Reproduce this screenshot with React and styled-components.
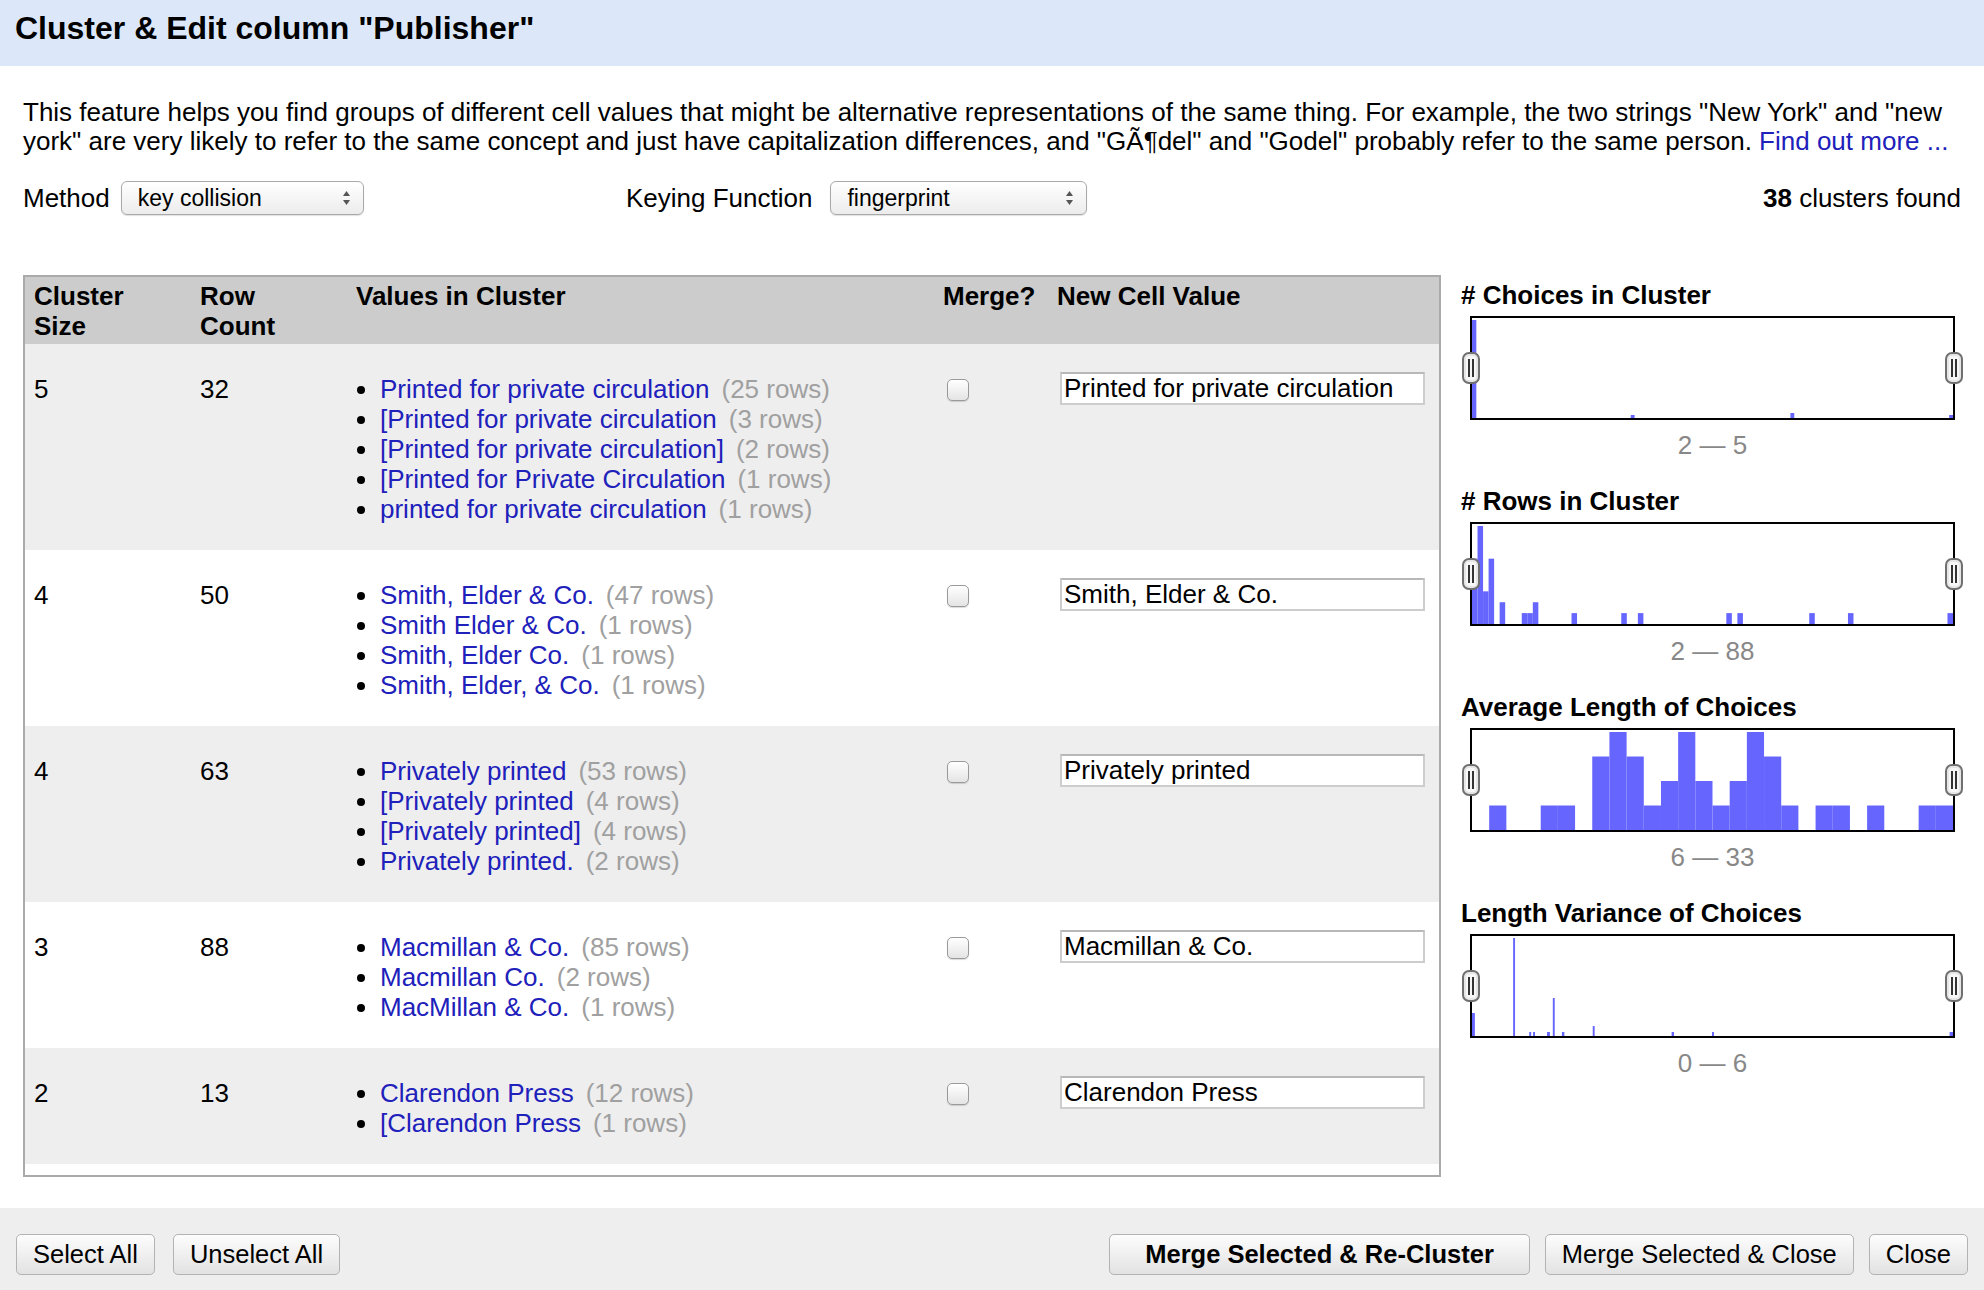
import React from "react";
import styled, { createGlobalStyle } from "styled-components";

const GlobalStyle = createGlobalStyle`
  html, body {
    margin: 0;
    padding: 0;
    background: #fff;
    overflow: hidden;
  }
  body {
    font-family: "Liberation Sans", Arial, sans-serif;
    color: #000;
  }
`;

const Dialog = styled.div`
  width: 1984px;
  height: 1290px;
  display: flex;
  flex-direction: column;
`;

const Header = styled.div`
  height: 66px;
  box-sizing: border-box;
  padding: 10px 15px 0;
  background: #dce8f9;
  font-size: 32px;
  font-weight: bold;
  line-height: 36px;
`;

const Body = styled.div`
  padding: 32px 23px 0;
  display: flex;
  flex-direction: column;
`;

const Description = styled.p`
  margin: 0;
  font-size: 26px;
  line-height: 29px;
`;

const Link = styled.a`
  color: #2020bb;
  text-decoration: none;
`;

const Controls = styled.div`
  margin-top: 25px;
  height: 34px;
  display: grid;
  grid-template-columns: 603px 1fr auto;
  align-items: center;
  font-size: 26px;
`;

const Field = styled.div`
  display: flex;
  align-items: center;
  gap: ${(p) => p.$gap}px;
`;

const Select = styled.div`
  width: ${(p) => p.$width}px;
  height: 34px;
  box-sizing: border-box;
  padding: 0 12px 0 16px;
  display: flex;
  align-items: center;
  justify-content: space-between;
  border: 1px solid #a9a9a9;
  border-radius: 6px;
  background: linear-gradient(#ffffff, #ececec);
  box-shadow: 0 1px 1px rgba(0, 0, 0, 0.12);
  font-size: 23px;
`;

const Found = styled.div`
  text-align: right;
`;

const Main = styled.div`
  margin-top: 60px;
  display: flex;
  gap: 20px;
`;

const Panel = styled.div`
  width: 1418px;
  height: 902px;
  box-sizing: border-box;
  border: 2px solid #aaa;
  overflow: hidden;
`;

const Table = styled.table`
  width: 100%;
  border-collapse: collapse;
  table-layout: fixed;
  font-size: 26px;
  line-height: 30px;
`;

const HeadCell = styled.th`
  background: #ccc;
  text-align: left;
  vertical-align: top;
  padding: 4px 9px 3px;
  font-weight: bold;
`;

const Cell = styled.td`
  background: ${(p) => (p.$shade ? "#eee" : "#fff")};
  vertical-align: top;
  padding: 30px 9px 26px;
`;

const Values = styled.ul`
  margin: 0;
  padding-left: 24px;
  list-style: disc;
`;

const Value = styled.li`
  line-height: 30px;
`;

const ValueLink = styled.span`
  color: #2020bb;
`;

const Count = styled.span`
  color: #a0a0a0;
  margin-left: 12px;
`;

const Checkbox = styled.input`
  appearance: none;
  display: block;
  margin: 5px 0 0 4px;
  width: 22px;
  height: 22px;
  border: 1px solid #9a9a9a;
  border-radius: 5px;
  background: linear-gradient(#ffffff, #e4e4e4);
  box-shadow: 0 1px 1px rgba(0, 0, 0, 0.15);
`;

const CellInput = styled.input`
  display: block;
  margin: -2px 0 0 3px;
  width: 365px;
  height: 33px;
  box-sizing: border-box;
  padding: 0 2px;
  border: 2px solid #cdcdcd;
  border-top-color: #b8b8b8;
  background: #fff;
  font-family: "Liberation Sans", Arial, sans-serif;
  font-size: 26px;
  color: #000;
`;

const Charts = styled.div`
  padding-top: 5px;
  display: flex;
  flex-direction: column;
  gap: 26px;
`;

const Facet = styled.div``;

const FacetTitle = styled.div`
  font-size: 26px;
  font-weight: bold;
  line-height: 30px;
`;

const Plot = styled.div`
  position: relative;
  margin: 6px 0 0 9px;
  width: 485px;
  height: 104px;
  box-sizing: border-box;
  border: 2px solid #000;
  background: #fff;
`;

const Handle = styled.svg`
  position: absolute;
  top: 50%;
  left: ${(p) => (p.$right ? "calc(100% + 1px)" : "-1px")};
  transform: translate(-50%, -50%);
`;

const Range = styled.div`
  margin: 10px 0 0 9px;
  width: 485px;
  text-align: center;
  color: #888;
  font-size: 26px;
  line-height: 30px;
`;

const Footer = styled.div`
  margin-top: auto;
  height: 82px;
  box-sizing: border-box;
  padding: 26px 16px 0;
  background: #eee;
  display: flex;
  align-items: flex-start;
`;

const ButtonGroup = styled.div`
  display: flex;
  gap: ${(p) => p.$gap}px;
  margin-left: ${(p) => (p.$right ? "auto" : "0")};
`;

const Button = styled.button`
  height: 41px;
  padding: 0 ${(p) => (p.$primary ? 35 : 16)}px;
  border: 1px solid #b3b3b3;
  border-radius: 5px;
  background: linear-gradient(#fdfdfd, #e2e2e2);
  font-family: "Liberation Sans", Arial, sans-serif;
  font-size: 25.5px;
  font-weight: ${(p) => (p.$primary ? "bold" : "normal")};
  color: #000;
`;

const clusters = [
  {
    size: 5,
    rows: 32,
    values: [
      ["Printed for private circulation", 25],
      ["[Printed for private circulation", 3],
      ["[Printed for private circulation]", 2],
      ["[Printed for Private Circulation", 1],
      ["printed for private circulation", 1],
    ],
    value: "Printed for private circulation",
  },
  {
    size: 4,
    rows: 50,
    values: [
      ["Smith, Elder & Co.", 47],
      ["Smith Elder & Co.", 1],
      ["Smith, Elder Co.", 1],
      ["Smith, Elder, & Co.", 1],
    ],
    value: "Smith, Elder & Co.",
  },
  {
    size: 4,
    rows: 63,
    values: [
      ["Privately printed", 53],
      ["[Privately printed", 4],
      ["[Privately printed]", 4],
      ["Privately printed.", 2],
    ],
    value: "Privately printed",
  },
  {
    size: 3,
    rows: 88,
    values: [
      ["Macmillan & Co.", 85],
      ["Macmillan Co.", 2],
      ["MacMillan & Co.", 1],
    ],
    value: "Macmillan & Co.",
  },
  {
    size: 2,
    rows: 13,
    values: [
      ["Clarendon Press", 12],
      ["[Clarendon Press", 1],
    ],
    value: "Clarendon Press",
  },
];

// turn {value: count} into bars on a 0..1 scale
const binned = (min, max, counts) => {
  const n = max - min + 1;
  const top = Math.max(...Object.values(counts));
  return Object.entries(counts).map(([v, c]) => [
    (v - min) / n,
    1 / n,
    (c / top) * 0.98,
  ]);
};

const facets = [
  {
    title: "# Choices in Cluster",
    range: "2 \u2014 5",
    bars: [
      [0, 0.009, 0.98],
      [0.33, 0.008, 0.03],
      [0.662, 0.008, 0.05],
      [0.992, 0.008, 0.03],
    ],
  },
  {
    title: "# Rows in Cluster",
    range: "2 \u2014 88",
    bars: binned(2, 88, {
      2: 6, 3: 9, 4: 3, 5: 6, 7: 2, 11: 1, 12: 1, 13: 2, 20: 1, 29: 1,
      32: 1, 48: 1, 50: 1, 63: 1, 70: 1, 88: 1,
    }),
  },
  {
    title: "Average Length of Choices",
    range: "6 \u2014 33",
    bars: binned(6, 33, {
      7: 1, 10: 1, 11: 1, 13: 3, 14: 4, 15: 3, 16: 1, 17: 2, 18: 4, 19: 2,
      20: 1, 21: 2, 22: 4, 23: 3, 24: 1, 26: 1, 27: 1, 29: 1, 32: 1, 33: 1,
    }),
  },
  {
    title: "Length Variance of Choices",
    range: "0 \u2014 6",
    bars: [
      [0, 0.006, 0.23],
      [0.0855, 0.004, 0.98],
      [0.119, 0.004, 0.04],
      [0.127, 0.004, 0.04],
      [0.156, 0.006, 0.04],
      [0.168, 0.004, 0.38],
      [0.187, 0.005, 0.04],
      [0.251, 0.004, 0.1],
      [0.415, 0.005, 0.04],
      [0.499, 0.004, 0.04],
      [0.993, 0.007, 0.04],
    ],
  },
];

const intro =
  'This feature helps you find groups of different cell values that might be alternative ' +
  'representations of the same thing. For example, the two strings "New York" and "new york" ' +
  'are very likely to refer to the same concept and just have capitalization differences, and ' +
  '"G\u00C3\u00B6del" and "Godel" probably refer to the same person. ';

const SelectArrows = () => (
  <svg width="9" height="16" viewBox="0 0 9 16">
    <path d="M4.5 1 L8 6 L1 6 Z" fill="#555" />
    <path d="M4.5 15 L8 10 L1 10 Z" fill="#555" />
  </svg>
);

const Grip = ({ right }) => (
  <Handle $right={right} width="18" height="32" viewBox="0 0 18 32">
    <rect x="1" y="1" width="16" height="30" rx="6" fill="#e6e6e6" stroke="#707070" strokeWidth="2" />
    <rect x="4" y="4" width="10" height="24" rx="3" fill="#f7f7f7" />
    <rect x="6" y="7" width="2" height="18" fill="#333" />
    <rect x="10" y="7" width="2" height="18" fill="#333" />
  </Handle>
);

const Histogram = ({ bars }) => (
  <Plot>
    <svg width="100%" height="100%" viewBox="0 0 1000 100" preserveAspectRatio="none">
      {bars.map(([x, w, h], i) => (
        <rect key={i} x={x * 1000} y={100 - h * 100} width={w * 1000} height={h * 100} fill="#6666ff" />
      ))}
    </svg>
    <Grip />
    <Grip right />
  </Plot>
);

export default function App() {
  return (
    <Dialog>
      <GlobalStyle />
      <Header>Cluster &amp; Edit column "Publisher"</Header>
      <Body>
        <Description>
          {intro}
          <Link href="#">Find out more ...</Link>
        </Description>
        <Controls>
          <Field $gap={11}>
            Method
            <Select $width={243}>
              key collision
              <SelectArrows />
            </Select>
          </Field>
          <Field $gap={18}>
            Keying Function
            <Select $width={257}>
              fingerprint
              <SelectArrows />
            </Select>
          </Field>
          <Found>
            <b>38</b> clusters found
          </Found>
        </Controls>
        <Main>
          <Panel>
            <Table>
              <colgroup>
                <col style={{ width: 166 }} />
                <col style={{ width: 156 }} />
                <col style={{ width: 587 }} />
                <col style={{ width: 114 }} />
                <col />
              </colgroup>
              <thead>
                <tr>
                  <HeadCell>
                    Cluster
                    <br />
                    Size
                  </HeadCell>
                  <HeadCell>
                    Row
                    <br />
                    Count
                  </HeadCell>
                  <HeadCell>Values in Cluster</HeadCell>
                  <HeadCell>Merge?</HeadCell>
                  <HeadCell>New Cell Value</HeadCell>
                </tr>
              </thead>
              <tbody>
                {clusters.map((c, i) => {
                  const shade = i % 2 === 0;
                  return (
                    <tr key={i}>
                      <Cell $shade={shade}>{c.size}</Cell>
                      <Cell $shade={shade}>{c.rows}</Cell>
                      <Cell $shade={shade}>
                        <Values>
                          {c.values.map(([name, n]) => (
                            <Value key={name}>
                              <ValueLink>{name}</ValueLink>
                              <Count>({n} rows)</Count>
                            </Value>
                          ))}
                        </Values>
                      </Cell>
                      <Cell $shade={shade}>
                        <Checkbox type="checkbox" />
                      </Cell>
                      <Cell $shade={shade}>
                        <CellInput defaultValue={c.value} />
                      </Cell>
                    </tr>
                  );
                })}
              </tbody>
            </Table>
          </Panel>
          <Charts>
            {facets.map((f) => (
              <Facet key={f.title}>
                <FacetTitle>{f.title}</FacetTitle>
                <Histogram bars={f.bars} />
                <Range>{f.range}</Range>
              </Facet>
            ))}
          </Charts>
        </Main>
      </Body>
      <Footer>
        <ButtonGroup $gap={18}>
          <Button>Select All</Button>
          <Button>Unselect All</Button>
        </ButtonGroup>
        <ButtonGroup $gap={15} $right>
          <Button $primary>Merge Selected &amp; Re-Cluster</Button>
          <Button>Merge Selected &amp; Close</Button>
          <Button>Close</Button>
        </ButtonGroup>
      </Footer>
    </Dialog>
  );
}
